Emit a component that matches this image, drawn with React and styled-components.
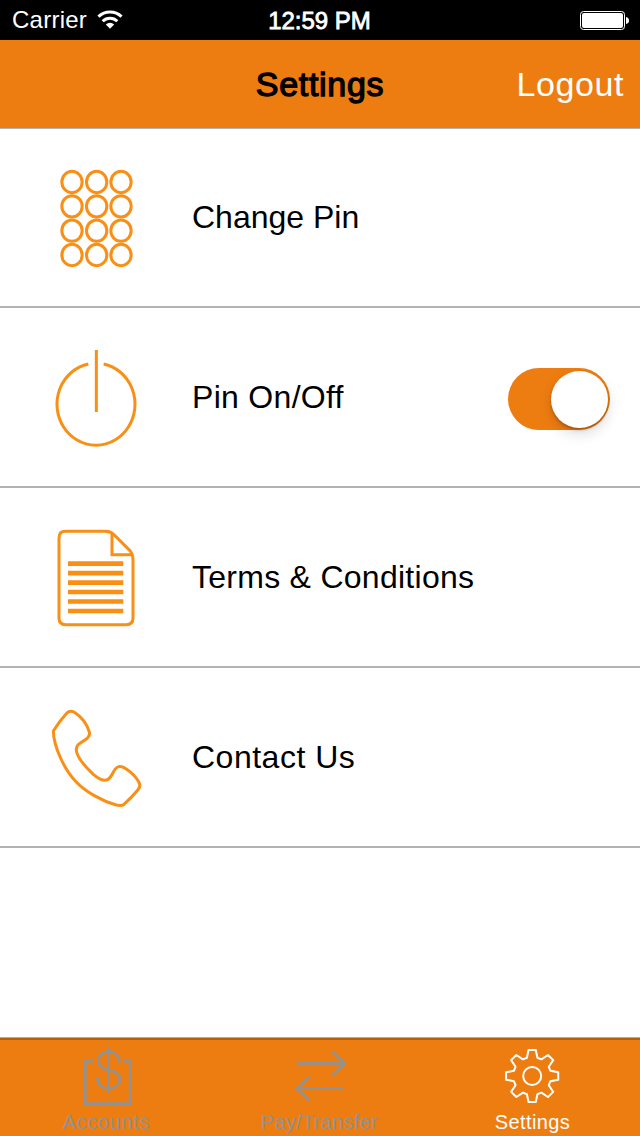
import React, { useState } from "react";
import styled, { createGlobalStyle } from "styled-components";

const ORANGE = "#ee7d11";
const ICON_ORANGE = "#f98f14";

function KeypadIcon() {
  return (
    <RowIcon viewBox="0 0 330 360">
      {[66, 139, 212, 285].map((y) =>
        [96, 170, 243].map((x) => (
          <ellipse key={`${x}-${y}`} cx={x} cy={y} rx="30.5" ry="32" />
        ))
      )}
    </RowIcon>
  );
}

function PowerIcon() {
  return (
    <RowIcon viewBox="0 0 330 360">
      <path d="M145 72 A117 123 0 1 0 191 72" />
      <path d="M169 30 V216" strokeWidth="9" />
    </RowIcon>
  );
}

function DocumentIcon() {
  return (
    <RowIcon viewBox="0 0 330 360">
      <path d="M76 34 H196 Q211 34 221 43 L269 91 Q279 102 279 120 V294 Q279 314 259 314 H77 Q57 314 57 294 V54 Q57 34 76 34 Z" />
      <path d="M216 40 V104 H276" />
      {[131, 159.5, 188, 216, 244.5, 273].map((y) => (
        <path key={y} d={`M84 ${y} H250`} strokeWidth="14" />
      ))}
    </RowIcon>
  );
}

function PhoneIcon() {
  return (
    <RowIcon viewBox="0 0 330 360">
      <path d="M40 93 Q59 63 78 42 Q88 29 102 36 C122 49 141 72 148 96 Q151 108 139 117 L120 130 Q109 137 109 150 C110 173 142 206 160 223 Q179 239 193 241 C216 243 217 208 233 201 C250 193 291 229 299 253 Q301 262 294 269 Q274 293 251 314 Q243 318 229 315 C185 303 134 274 106 243 C73 208 41 140 40 93 Z" />
    </RowIcon>
  );
}

function AccountsIcon() {
  return (
    <TabIcon viewBox="109.5 48 180 180">
      <path d="M160 93 H134 V221 H269.500 V93 H248" strokeWidth="9" />
      <path d="M205 50 V191" strokeWidth="6" />
      <path d="M237 97 C236 77 223 65 205 65 C186 65 174 76 174 92 C174 112 190 117 205 120 C222 124 238 130 238 147 C238 165 224 175 205 175 C184 175 171 164 170 141" />
    </TabIcon>
  );
}

function TransferIcon() {
  return (
    <TabIcon viewBox="119.5 48 180 180">
      <path d="M140 100 H284 M246 65 L285 100 L246 136" />
      <path d="M282 176 H140 M177 141 L139 176 L177 211" />
    </TabIcon>
  );
}

// eight teeth, four corners each
const gearPoints = [];
for (let i = 0; i < 8; i++) {
  [
    [-16, 57],
    [-8, 79],
    [8, 79],
    [16, 57],
  ].forEach(([offset, r]) => {
    const a = ((i * 45 + offset) * Math.PI) / 180;
    gearPoints.push(
      `${(156 + r * Math.sin(a)).toFixed(1)},${(138 - r * Math.cos(a)).toFixed(1)}`
    );
  });
}

function GearIcon() {
  return (
    <TabIcon viewBox="68.5 48 180 180" strokeWidth="6">
      <polygon points={gearPoints.join(" ")} strokeLinejoin="round" />
      <circle cx="156" cy="138" r="27" />
    </TabIcon>
  );
}

function WifiIcon() {
  return (
    <Wifi viewBox="290 28 84 64">
      <path d="M297.300 51 A50 50 0 0 1 366.700 51" />
      <path d="M310 65 A31 31 0 0 1 354 65" />
      <path d="M332 87 L319.500 74.500 A17.500 17.500 0 0 1 344.500 74.500 Z" fill="#fff" stroke="none" />
    </Wifi>
  );
}

function BatteryIcon() {
  return (
    <Battery viewBox="0 0 49 19">
      <rect x="0.5" y="0.5" width="44" height="18" rx="3" fill="none" stroke="#fff" />
      <rect x="2" y="2" width="41" height="15" rx="2" fill="#fff" />
      <path d="M46 6 Q49 6.500 49 9.500 Q49 12.500 46 13 Z" fill="#fff" />
    </Battery>
  );
}

const tabs = [
  { name: "Accounts", Icon: AccountsIcon, spacing: "0.65px" },
  { name: "Pay/Transfer", Icon: TransferIcon, spacing: "0.3px" },
  { name: "Settings", Icon: GearIcon, spacing: "0.4px" },
];

function App() {
  const [pinOn, setPinOn] = useState(true);
  const [activeTab, setActiveTab] = useState("Settings");

  return (
    <Screen>
      <GlobalStyle />
      <StatusBar>
        <Carrier>
          Carrier
          <WifiIcon />
        </Carrier>
        <Time>12:59 PM</Time>
        <BatteryIcon />
      </StatusBar>
      <NavBar>
        <Title>Settings</Title>
        <Logout>Logout</Logout>
      </NavBar>
      <List>
        <Row>
          <KeypadIcon />
          <RowLabel>Change Pin</RowLabel>
        </Row>
        <Row>
          <PowerIcon />
          <RowLabel $spacing="0.3px">Pin On/Off</RowLabel>
          <Switch
            role="switch"
            aria-checked={pinOn}
            $on={pinOn}
            onClick={() => setPinOn(!pinOn)}
          >
            <Knob />
          </Switch>
        </Row>
        <Row>
          <DocumentIcon />
          <RowLabel $spacing="0.27px">Terms &amp; Conditions</RowLabel>
        </Row>
        <Row>
          <PhoneIcon />
          <RowLabel $spacing="0.5px">Contact Us</RowLabel>
        </Row>
      </List>
      <TabBar>
        {tabs.map(({ name, Icon, spacing }) => (
          <Tab
            key={name}
            $active={name === activeTab}
            onClick={() => setActiveTab(name)}
          >
            <Icon />
            <TabLabel $spacing={spacing}>{name}</TabLabel>
          </Tab>
        ))}
      </TabBar>
    </Screen>
  );
}

export default App;

const GlobalStyle = createGlobalStyle`
  * {
    box-sizing: border-box;
  }
  body {
    margin: 0;
    background-color: #fff;
    font-family: "Liberation Sans", Arial, sans-serif;
  }
  button {
    border: none;
    padding: 0;
    background: none;
    font-family: inherit;
    cursor: pointer;
  }
`;

const Screen = styled.div`
  width: 640px;
  height: 1136px;
  display: flex;
  flex-direction: column;
  background-color: #fff;
  overflow: hidden;
`;

const StatusBar = styled.header`
  height: 40px;
  padding: 0 11px 0 12px;
  display: grid;
  grid-template-columns: 1fr auto 1fr;
  align-items: center;
  background-color: #000;
  color: #fff;
  font-size: 24px;
  line-height: 42px;
`;

const Carrier = styled.div`
  display: flex;
  align-items: center;
  gap: 9px;
  height: 40px;
  letter-spacing: 0.25px;
`;

const Wifi = styled.svg`
  width: 28px;
  height: 21.3px;
  fill: none;
  stroke: #fff;
  stroke-width: 9;
`;

const Time = styled.div`
  height: 40px;
  padding-right: 2px;
  -webkit-text-stroke: 0.8px #fff;
`;

const Battery = styled.svg`
  width: 49px;
  height: 19px;
  justify-self: end;
`;

const NavBar = styled.nav`
  height: 88px;
  padding: 0 16px;
  display: grid;
  grid-template-columns: 1fr auto 1fr;
  align-items: center;
  background-color: ${ORANGE};
  font-size: 34px;
  line-height: 88px;
`;

const Title = styled.div`
  grid-column: 2;
  color: #000;
  letter-spacing: 0.7px;
  -webkit-text-stroke: 1.3px #000;
`;

const Logout = styled.button`
  justify-self: end;
  color: #fff;
  font-size: 34px;
  letter-spacing: 0.6px;
`;

const List = styled.main`
  flex: 1;
  box-shadow: inset 0 1px 0 #b2b2b2;
`;

const Row = styled.div`
  height: 180px;
  padding: 6px 30px 0 40px;
  display: flex;
  align-items: center;
  border-bottom: 2px solid #b2b2b2;
`;

const RowIcon = styled.svg`
  width: 110px;
  height: 120px;
  margin-right: 42px;
  fill: none;
  stroke: ${ICON_ORANGE};
  stroke-width: 9;
`;

const RowLabel = styled.div`
  flex: 1;
  padding-bottom: 6px;
  color: #000;
  font-size: 32px;
  letter-spacing: ${({ $spacing }) => $spacing || "normal"};
`;

const Switch = styled.button`
  width: 102px;
  height: 62px;
  padding: 0 2px;
  margin-bottom: 2px;
  display: flex;
  align-items: center;
  justify-content: ${({ $on }) => ($on ? "flex-end" : "flex-start")};
  border-radius: 31px;
  background-color: ${({ $on }) => ($on ? ORANGE : "#e5e5e5")};
`;

const Knob = styled.span`
  width: 57px;
  height: 57px;
  border-radius: 50%;
  background-color: #fff;
  box-shadow: 0 6px 14px rgba(0, 0, 0, 0.14), 0 2px 3px rgba(0, 0, 0, 0.22);
`;

const TabBar = styled.footer`
  height: 99px;
  padding: 6px 1px 0 0;
  display: grid;
  grid-template-columns: repeat(3, 1fr);
  border-top: 1px solid #a8b0b3;
  background-color: ${ORANGE};
  box-shadow: inset 0 2px 0 #b45f0d;
`;

const Tab = styled.button`
  display: flex;
  flex-direction: column;
  align-items: center;
  justify-content: flex-start;
  padding-top: 2px;
  color: ${({ $active }) => ($active ? "#fff" : "#929292")};
`;

const TabIcon = styled.svg.attrs(({ strokeWidth = 8 }) => ({ strokeWidth }))`
  width: 60px;
  height: 60px;
  flex-shrink: 0;
  fill: none;
  stroke: currentColor;
`;

const TabLabel = styled.span`
  margin-top: 5px;
  font-size: 20px;
  line-height: 23px;
  letter-spacing: ${({ $spacing }) => $spacing};
  white-space: nowrap;
`;
